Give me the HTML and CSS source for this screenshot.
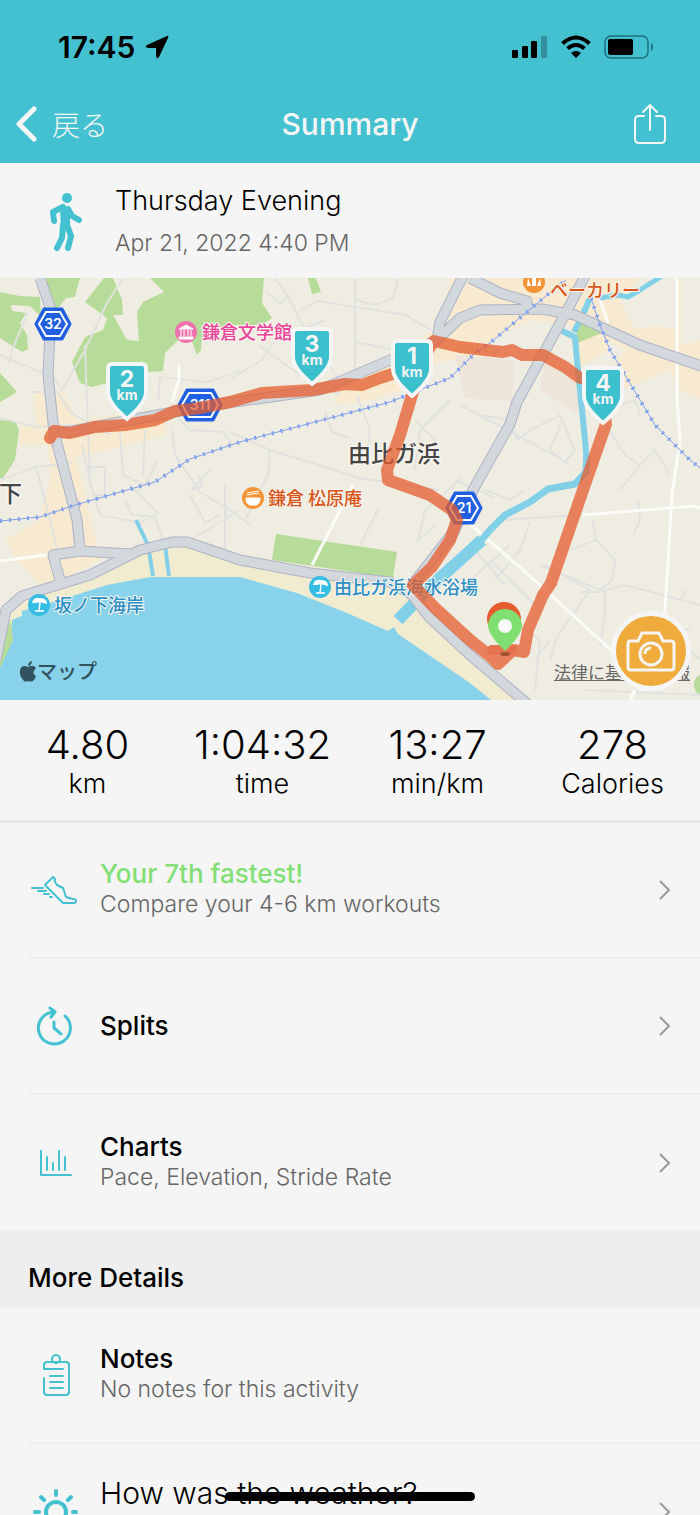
FILE: index.html
```html
<!DOCTYPE html>
<html lang="en">
<head>
  <meta charset="UTF-8">
  <meta name="viewport" content="width=device-width, initial-scale=1.0">
  <title>Summary</title>
  <link rel="stylesheet" href="styles.css">
</head>
<body>
  <header class="header">
    <div class="status">
      <div class="status-time">
        <span>17:45</span>
        <svg width="24" height="24" viewBox="0 0 24 24"><path d="M22 1Q24 0 23 3L14 22Q12 25 11 21V13H3Q-1 12 2 10Z"/></svg>
      </div>
      <div class="status-icons">
        <svg width="36" height="24" viewBox="0 0 36 24">
          <rect x="0" y="15" width="6" height="8" rx="1"/>
          <rect x="10" y="11" width="6" height="12" rx="1"/>
          <rect x="19" y="6" width="6" height="17" rx="1"/>
          <rect x="29" y="1" width="6" height="22" rx="1" opacity=".25"/>
        </svg>
        <svg width="30" height="24" viewBox="0 0 30 24">
          <g fill="none" stroke="#000" stroke-width="4">
            <path d="M1.500 8.500Q15-3.500 28.500 8.500"/>
            <path d="M6.500 13.500Q15 6.500 23.500 13.500"/>
          </g>
          <path d="M10 18Q15 14 20 18L15 23Z"/>
        </svg>
        <svg width="50" height="24" viewBox="0 0 50 24">
          <rect x="1" y="1" width="43" height="22" rx="6" fill="none" stroke="#1f6f7b" stroke-width="1.500"/>
          <rect x="4" y="4" width="25" height="16" rx="2"/>
          <path d="M47 8Q49 9 49 12T47 16Z" fill="#1f6f7b"/>
        </svg>
      </div>
    </div>
    <nav class="nav">
      <a class="back" href="#">
        <svg width="22" height="36" viewBox="0 0 22 36"><path d="M18 3L3 18L18 33"/></svg>
        <span lang="ja">戻る</span>
      </a>
      <h1>Summary</h1>
      <button class="share" aria-label="Share">
        <svg width="34" height="42" viewBox="0 0 34 42"><path d="M11 13H6Q2 13 2 17V36Q2 40 6 40H28Q32 40 32 36V17Q32 13 28 13H23M17 27V2M10 9L17 2L24 9"/></svg>
      </button>
    </nav>
  </header>

  <main>
    <section class="activity">
      <svg width="36" height="64" viewBox="0 0 36 64">
        <circle cx="19" cy="8" r="5"/>
        <path d="M12 18Q17 14 22 20L22 36L13 38Z"/>
        <path class="limb" d="M15 17L5 22L6 31M20 19L24 26L31 30M15 35L14 48L9 58M19 35L23 46L20 58"/>
      </svg>
      <div>
        <h2>Thursday Evening</h2>
        <p>Apr 21, 2022 4:40 PM</p>
      </div>
    </section>

    <section class="map" lang="ja">
      <svg class="map-canvas" viewBox="0 278 700 422">
        <rect y="278" width="700" height="422" fill="#efede2"/>

        <!-- built-up areas -->
        <g fill="#f7ead0">
          <path d="M34 392H58L62 390L78 420L165 408L166 434L110 450L76 456L95 535L100 560L60 580L40 585L15 558L5 540L40 520L50 480L48 445H20V426H36Z"/>
          <path d="M450 278H700V400L680 390L670 370L620 390L610 350L560 378L520 350L440 362L370 400L335 405V395L440 325Z"/>
          <path d="M355 370L420 345L425 385L372 399Z"/>
        </g>
        <g fill="#efede2">
          <path d="M490 340L530 320L570 325L575 370L545 358L490 350Z"/>
          <path d="M608 340L625 350L610 370Z"/>
          <path d="M640 278H676V330L655 325L635 330L620 300Z"/>
          <path d="M681 278H700V340L681 345Z"/>
        </g>
        <path d="M455 355L515 360L512 401L465 398ZM545 362L582 372L578 415L540 390Z" fill="#eee4d9"/>

        <!-- parks and woods -->
        <g fill="#b7db98">
          <path d="M0 292L20 296L40 297L41 317L30 306L11 305L12 311L26 313L20 323L27 335L28 349L22 352L0 338Z"/>
          <path d="M45 278H80L75 297L66 298L52 316L48 300Z"/>
          <path d="M104 278L85 302L107 318L103 330L85 337L72 362L80 383L92 387L107 383L110 365L148 372L163 371L165 353L180 338L190 336L197 355L201 350L202 338L235 325H262L272 318L262 303L264 278H150L164 292L143 302L137 312L139 341L127 340L113 315H123L122 300L113 278Z"/>
          <path d="M0 373L17 392L0 402ZM0 420L15 421L19 430L15 460L3 478H0Z"/>
          <path d="M276 534L397 552L393 578L272 560Z"/>
          <path d="M577 325L588 323L598 325L602 333L577 343Z"/>
          <path d="M308 278H316L321 292L312 294Z"/>
          <circle cx="706" cy="685" r="12"/>
        </g>

        <!-- beach and sea -->
        <path d="M10 612L30 595L90 576L140 552L185 545L310 575L390 583L430 620L515 700H470L0 690Z" fill="#f1ebd0"/>
        <path d="M0 667L12 642L12 620L22 616V611L60 600L107 585L150 577L240 577L297 593L347 613L388 631L394 627L398 634L470 683L491 700H0Z" fill="#88d3eb"/>
        <path d="M11 620L13 640L0 668V640Z" fill="#b7db98"/>

        <!-- lanes -->
        <g class="lane">
          <path d="M8 365L12 350L28 312M0 355L54 378L62 390L85 350L106 305L123 278M32 392H58L70 412L110 435M0 418L36 427L70 425M0 480L36 467L72 463M36 467L50 520L60 560M82 445L92 490L100 515L140 523L158 513L130 485"/>
          <path d="M88 467H105V495H92M120 432L123 475L145 485L158 460M145 430L143 475M152 415H175L190 430L225 432M158 400L160 377L208 382L240 371M172 430L175 455L200 492L230 510L250 525M198 475L203 485L192 490L210 470M223 430L232 445"/>
          <path d="M232 378L262 360L275 340L325 320M258 345L300 375L340 395M266 292L280 303L290 295M275 278L290 300L310 340L340 380M300 310L318 301L405 315L440 335M355 278V378M355 300L375 305L393 298L398 278M355 342L395 350"/>
          <path d="M230 432L270 450L360 478L440 490M270 450L268 475L245 520M325 412L332 432L350 438M357 395L370 430L368 450M378 510L360 545M415 420L440 445M450 400L420 430L415 470M462 478L425 510L418 540L435 526"/>
          <path d="M480 415L508 420L518 440L530 430L560 415L575 450L565 462L550 450L560 425M460 405L545 450L570 465M525 490L510 500L485 490M455 480L495 498M606 425L625 455L640 465L655 450L670 475M640 465L620 490M620 405L635 400L640 415"/>
          <path d="M593 520L596 540L615 560L612 580L600 590L540 565M596 540L570 550M545 565L590 590L557 637L550 660M580 592H600L625 585L700 605M605 590L605 615L600 645M638 500L640 520L633 535M680 600L686 590"/>
          <path d="M480 545L500 520L580 515M530 522L520 550L495 580M475 550L505 585M465 585L510 545M510 620L540 640L535 690M490 560L540 610M690 630L665 625L700 660M535 660L550 640M585 690L700 695"/>
          <path d="M85 345L90 485M125 500L132 515L155 517L165 545M190 495L205 523L220 515M225 485L225 560M190 540L240 510"/>
        </g>
        <g fill="none" stroke="#fbfbf8" stroke-width="3">
          <path d="M677 278L677 400L680 440L672 495L665 610L640 690M470 524L540 585L613 652M583 515L695 506L700 508M353 485L312 565M0 561L53 554M179 365L179 380L172 402M600 300L608 323M635 690L630 700"/>
        </g>

        <!-- rivers -->
        <g fill="none" stroke="#82d0e8" stroke-linejoin="round">
          <path d="M662 276L640 290L628 297L618 295L600 298" stroke-width="5"/>
          <path d="M590 298L584 312L574 332M562 331L575 337L577 360L581 400L585 440L587 462" stroke-width="6"/>
          <path d="M587 455L586 472L575 484L548 489L530 502L505 515L490 530L480 542" stroke-width="7"/>
          <path d="M482 540L460 560L430 587L398 620" stroke-width="12"/>
          <path d="M136 520L148 545L153 576M165 545L169 576" stroke-width="4"/>
        </g>

        <!-- main roads: casing first, then the surface -->
        <g fill="none" stroke-linejoin="round">
          <path class="road-casing" d="M40 278L51 310L48 375L54 432L68 485L77 520L80 549M-4 660L6 610L22 596L90 575L140 550L172 542H187L240 560L310 573L390 582L412 595L430 618L470 655L530 706M60 580L53 555L80 551L130 554M50 435L200 407L320 390L437 340L460 318L480 310L542 309L575 315L640 345L704 367M437 340L440 322L464 274M470 278L500 293L527 301L525 309M586 274L570 305L517 402L510 424L473 490L455 530L412 585"/>
          <path class="road" d="M40 278L51 310L48 375L54 432L68 485L77 520L80 549M-4 660L6 610L22 596L90 575L140 550L172 542H187L240 560L310 573L390 582L412 595L430 618L470 655L530 706M60 580L53 555L80 551L130 554M50 435L200 407L320 390L437 340L460 318L480 310L542 309L575 315L640 345L704 367M437 340L440 322L464 274M470 278L500 293L527 301L525 309M586 274L570 305L517 402L510 424L473 490L455 530L412 585"/>
        </g>

        <!-- railways -->
        <g class="rail">
          <path d="M0 521L40 517L75 505L155 482L190 459L240 442L390 402L427 387L450 378L475 353L490 343L553 290L566 280"/>
          <path d="M591 298L600 325L610 350L628 380L655 425L690 460L700 468"/>
        </g>
        <g class="rail-ticks">
          <path d="M0 521L40 517L75 505L155 482L190 459L240 442L390 402L427 387L450 378L475 353L490 343L553 290L566 280"/>
          <path d="M591 298L600 325L610 350L628 380L655 425L690 460L700 468"/>
        </g>

        <!-- road numbers -->
        <g class="shield">
          <path d="M36 324L44 309H62L70 324L62 339H44Z"/>
          <path d="M179 405L187 390H213L221 405L213 420H187Z"/>
          <path d="M447 508L455 493H473L481 508L473 523H455Z"/>
        </g>
        <g class="shield-inner">
          <path d="M39 324L46 312H60L67 324L60 336H46Z"/>
          <path d="M182 405L189 393H211L218 405L211 417H189Z"/>
          <path d="M450 508L457 496H471L478 508L471 520H457Z"/>
        </g>
        <g class="shield-text">
          <text x="53" y="329">32</text>
          <text x="200" y="410">311</text>
          <text x="464" y="513">21</text>
        </g>

        <!-- places -->
        <circle cx="186" cy="332" r="11" fill="#ef72ad"/>
        <path d="M179 329L186 325L193 329ZM179 337H193V339H179ZM181 330V336M184 330V336M188 330V336M191 330V336" fill="#fff" stroke="#fff"/>
        <circle cx="253" cy="498" r="11" fill="#f29437"/>
        <path d="M246 498H260Q260 504 256 505H250Q246 504 246 498ZM247 495L259 493M247 493L259 491" fill="#fff" stroke="#fff"/>
        <circle cx="534" cy="282" r="11" fill="#f29437"/>
        <path d="M527 286L528 278L531 286ZM532 286V278H536V286ZM537 286L540 278L541 286Z" fill="#fff"/>
        <g id="umbrella">
          <circle cx="39" cy="605" r="11" fill="#35bde4"/>
          <path d="M32 603Q33 597 40 598Q47 598 47 604L43 603L40 602L36 603Z" fill="#fff"/>
          <path d="M40 602L39 611M35 611H44" stroke="#fff" stroke-width="1.500"/>
        </g>
        <use href="#umbrella" x="281" y="-18"/>
        <g class="place">
          <text x="202" y="339" fill="#e8459a">鎌倉文学館</text>
          <text x="550" y="297" fill="#d9561a">ベーカリー</text>
          <text x="268" y="505" fill="#d9561a">鎌倉 松原庵</text>
          <text x="54" y="612" fill="#2b8fc6">坂ノ下海岸</text>
          <text x="334" y="594" fill="#2b8fc6">由比ガ浜海水浴場</text>
        </g>
        <g class="district">
          <text x="348" y="462">由比ガ浜</text>
          <text x="-1" y="502">下</text>
        </g>
        <g fill="#31525e">
          <path d="M36 668Q33 664 28 667Q22 664 20 670Q19 676 24 681Q26 682 28 681Q31 682 33 681Q35 679 36 676Q31 673 36 668ZM28 666Q28 662 32 661Q32 665 28 666Z"/>
          <text class="brand" x="37" y="679">マップ</text>
        </g>

        <!-- walked route -->
        <path class="route" d="M50 438L54 431L70 433L95 427L125 425L155 420L175 411L200 408L230 402L262 393L312 390L345 384L362 385L380 378L405 370L428 350L434 341L460 347L503 352L512 350L522 355H543L565 367L580 378H600L606 424L583 490L551 583L543 595L528 630L524 652L513 650L498 664L490 656L470 640L435 608L413 585L432 567L450 540L457 520L452 510L430 495L388 480L387 470L400 435L412 395L428 350"/>
        <path d="M492 650H512" stroke="#e57350" stroke-width="10" stroke-linecap="round"/>

        <circle cx="504" cy="619" r="17" fill="#e55c2d"/>
        <ellipse cx="505" cy="654" rx="5" ry="2" fill="#a4512f"/>
        <path d="M505 651Q489 636 488 626A17 17 0 0 1 522 626Q521 636 505 651Z" fill="#80df71"/>
        <circle cx="505" cy="626" r="7" fill="#fafafa"/>

        <!-- distance markers -->
        <defs>
          <path id="marker" d="M-15 -56H15Q19 -56 19 -52V-28Q19 -17 0 -1Q-19 -17 -19 -28V-52Q-19 -56 -15 -56Z"/>
        </defs>
        <g class="marker">
          <use href="#marker" x="127" y="420"/>
          <use href="#marker" x="312" y="385"/>
          <use href="#marker" x="412" y="397"/>
          <use href="#marker" x="603" y="424"/>
        </g>
        <g class="marker-text">
          <text x="127" y="387">2<tspan class="unit" x="127" dy="13">km</tspan></text>
          <text x="312" y="352">3<tspan class="unit" x="312" dy="13">km</tspan></text>
          <text x="412" y="364">1<tspan class="unit" x="412" dy="13">km</tspan></text>
          <text x="603" y="391">4<tspan class="unit" x="603" dy="13">km</tspan></text>
        </g>
      </svg>
      <a class="legal" href="#">法律に基づく情報</a>
      <button class="camera" aria-label="Add photo">
        <svg width="50" height="42" viewBox="0 0 50 42">
          <path d="M4 11H12L16 3H33L37 11H45Q48 11 48 14V37Q48 40 45 40H5Q2 40 2 37V14Q2 11 4 11Z"/>
          <circle cx="25" cy="24" r="11"/>
          <path d="M19 24Q19 18 25 18"/>
        </svg>
      </button>
    </section>

    <dl class="stats">
      <div><dd>4.80</dd><dt>km</dt></div>
      <div><dd>1:04:32</dd><dt>time</dt></div>
      <div><dd>13:27</dd><dt>min/km</dt></div>
      <div><dd>278</dd><dt>Calories</dt></div>
    </dl>

    <div class="list">
      <a class="row" href="#">
        <svg class="icon" viewBox="0 0 48 48"><path d="M23 11L15 19L33 37H44Q46 37 46 35Q46 33 43 33L36 31L33 22L27 19Q24 15 25 13ZM2 22H13M8 25H16M14 28H19M20 31H22"/></svg>
        <div class="row-text">
          <h3 class="best">Your 7th fastest!</h3>
          <p>Compare your 4-6 km workouts</p>
        </div>
        <svg class="chevron" viewBox="0 0 14 24"><path d="M2 3L11 12L2 21"/></svg>
      </a>
      <a class="row" href="#">
        <svg class="icon bold" viewBox="0 0 48 48"><path d="M35 14A16 16 0 1 1 25 10M20 6L25 10L21 15M24 20V26L31 32"/></svg>
        <div class="row-text">
          <h3>Splits</h3>
        </div>
        <svg class="chevron" viewBox="0 0 14 24"><path d="M2 3L11 12L2 21"/></svg>
      </a>
      <a class="row" href="#">
        <svg class="icon" viewBox="0 0 48 48"><path d="M11 12V36H41M17 18V31M23 24V31M29 12V31M35 18V31"/></svg>
        <div class="row-text">
          <h3>Charts</h3>
          <p>Pace, Elevation, Stride Rate</p>
        </div>
        <svg class="chevron" viewBox="0 0 14 24"><path d="M2 3L11 12L2 21"/></svg>
      </a>
    </div>

    <h2 class="section-title">More Details</h2>

    <div class="list">
      <div class="row">
        <svg class="icon" viewBox="0 0 48 48"><circle cx="26" cy="8" r="4"/><path d="M33 18H14V14Q14 11 17 11H36Q39 11 39 14V41Q39 44 36 44H17Q14 44 14 41V27M20 25H33M20 31H33M20 37H33"/></svg>
        <div class="row-text">
          <h3>Notes</h3>
          <p>No notes for this activity</p>
        </div>
      </div>
      <a class="row" href="#">
        <svg class="icon sun" viewBox="0 0 48 48"><circle cx="26" cy="24" r="10"/><path d="M26 3V7M5 24H9M43 24H46M11 9L14 12M41 9L38 12M11 39L14 36M41 39L38 36M26 41V45"/></svg>
        <div class="row-text row-question">How was the weather?</div>
        <svg class="chevron" viewBox="0 0 14 24"><path d="M2 3L11 12L2 21"/></svg>
      </a>
    </div>
  </main>

  <div class="home-bar"></div>
</body>
</html>
```

FILE: styles.css
```css
* {
  box-sizing: border-box;
}
body {
  margin: 0;
  height: 100vh;
  overflow: hidden;
  background: #f5f5f5;
  color: #000;
  font-family: Inter, "Noto Sans CJK JP", sans-serif;
}
h1, h2, h3, p, dl, dd {
  margin: 0;
}
a {
  color: inherit;
  text-decoration: none;
}
button {
  padding: 0;
  border: none;
  background: none;
  cursor: pointer;
}
svg {
  display: block;
  flex: none;
}

/* Header */
.header {
  background: #43c1d0;
  color: #f5f5f5;
}
.status {
  display: flex;
  justify-content: space-between;
  align-items: center;
  height: 84px;
  padding: 10px 46px 0 58px;
  color: #000;
}
.status-time {
  display: flex;
  align-items: center;
  gap: 10px;
  font-size: 30px;
  font-weight: 600;
}
.status-icons {
  display: flex;
  gap: 13px;
}
.nav {
  display: grid;
  grid-template-columns: 1fr auto 1fr;
  align-items: center;
  height: 79px;
  padding: 0 16px;
}
.nav h1 {
  font-size: 30px;
  font-weight: 500;
}
.nav svg {
  fill: none;
  stroke: #f5f5f5;
  stroke-linecap: round;
  stroke-linejoin: round;
}
.back {
  display: flex;
  align-items: center;
  gap: 14px;
  font-size: 28px;
  font-weight: 300;
}
.back svg {
  stroke-width: 5;
}
.share {
  justify-self: end;
  margin-right: 17px;
}
.share svg {
  stroke-width: 2;
}

/* Activity */
.activity {
  display: flex;
  align-items: center;
  gap: 31px;
  height: 115px;
  padding: 2px 48px 0;
}
.activity svg {
  fill: #43c1d0;
}
.limb {
  fill: none;
  stroke: #43c1d0;
  stroke-width: 6;
  stroke-linecap: round;
  stroke-linejoin: round;
}
.activity h2 {
  font-size: 27px;
  font-weight: 300;
  line-height: 42px;
}
.activity p {
  color: #666;
  font-size: 23px;
  font-weight: 300;
  line-height: 42px;
}

/* Map */
.map {
  position: relative;
}
.map-canvas {
  width: 100%;
  font-family: "Noto Sans CJK JP", sans-serif;
}
.lane {
  fill: none;
  stroke: #e1e2df;
  stroke-width: 2;
}
.road-casing {
  stroke: #aeb2c4;
  stroke-width: 11;
}
.road {
  stroke: #d3d8dc;
  stroke-width: 9;
}
.rail, .rail-ticks {
  fill: none;
  stroke: #7f9fee;
  stroke-width: 1;
}
.rail-ticks {
  stroke-width: 4;
  stroke-dasharray: 2 7;
}
.shield {
  fill: #1f5fe0;
  stroke: #1f5fe0;
  stroke-width: 3;
  stroke-linejoin: round;
}
.shield-inner {
  fill: #1f5fe0;
  stroke: #fff;
  stroke-width: 2;
}
.shield-text {
  fill: #fff;
  font-family: Inter, sans-serif;
  font-size: 14px;
  font-weight: 600;
  text-anchor: middle;
}
.place {
  font-size: 18px;
  font-weight: 500;
  stroke: #f7f5ee;
  stroke-width: 2;
  paint-order: stroke;
}
.district {
  fill: #444;
  font-size: 23px;
  font-weight: 500;
  stroke: #f7f5ee;
  stroke-width: 3;
  paint-order: stroke;
}
.brand {
  font-size: 20px;
  font-weight: 500;
}
.route {
  fill: none;
  stroke: #e55c2d;
  stroke-opacity: .75;
  stroke-width: 12;
  stroke-linecap: round;
  stroke-linejoin: round;
}
.marker {
  fill: #3cc0cd;
  stroke: #f5f5f5;
  stroke-width: 4;
}
.marker-text {
  fill: #f5f5f5;
  font-family: Inter, sans-serif;
  font-size: 23px;
  font-weight: 700;
  text-anchor: middle;
}
.unit {
  font-size: 14px;
}
.legal {
  position: absolute;
  right: 10px;
  bottom: 16px;
  color: #666;
  font-size: 17px;
  line-height: 22px;
  text-decoration: underline;
}
.camera {
  position: absolute;
  right: 9px;
  bottom: 9px;
  display: flex;
  align-items: center;
  justify-content: center;
  width: 80px;
  height: 80px;
  border: 5px solid #f5f5f5;
  border-radius: 50%;
  background: #efac3d;
}
.camera svg {
  fill: none;
  stroke: #f5f5f5;
  stroke-width: 3;
}

/* Stats */
.stats {
  display: grid;
  grid-template-columns: repeat(4, 1fr);
  height: 123px;
  padding-top: 22px;
  border-bottom: 3px solid #e9e9eb;
  text-align: center;
}
.stats dd {
  font-size: 40px;
  font-weight: 300;
  line-height: 45px;
}
.stats dt {
  font-size: 27px;
  font-weight: 300;
  line-height: 34px;
}

/* Lists */
.row {
  display: flex;
  align-items: center;
  height: 136px;
  margin-left: 28px;
  padding-right: 28px;
  border-bottom: 2px solid #eee;
}
.row:last-child {
  border-bottom: none;
}
.icon {
  width: 48px;
  height: 48px;
  margin: 0 22px 0 2px;
  fill: none;
  stroke: #43c1d0;
  stroke-width: 2;
  stroke-linecap: round;
  stroke-linejoin: round;
}
.bold {
  stroke-width: 3;
}
.sun {
  stroke-width: 4;
}
.row-text {
  flex: 1;
}
.row h3 {
  font-size: 26px;
  font-weight: 500;
  line-height: 32px;
}
.row .best {
  color: #83df75;
}
.row p {
  padding-bottom: 4px;
  color: #666;
  font-size: 23px;
  font-weight: 300;
  line-height: 28px;
}
.row-question {
  align-self: flex-start;
  padding-top: 32px;
  font-size: 30px;
  font-weight: 300;
  line-height: 34px;
}
.chevron {
  width: 14px;
  height: 24px;
  fill: none;
  stroke: #999;
  stroke-width: 2;
}
.section-title {
  height: 77px;
  padding: 30px 28px 0;
  background: #eee;
  font-size: 26px;
  font-weight: 500;
  line-height: 34px;
}
.home-bar {
  position: fixed;
  bottom: 14px;
  left: 50%;
  width: 250px;
  height: 9px;
  margin-left: -125px;
  border-radius: 5px;
  background: #000;
}
```
